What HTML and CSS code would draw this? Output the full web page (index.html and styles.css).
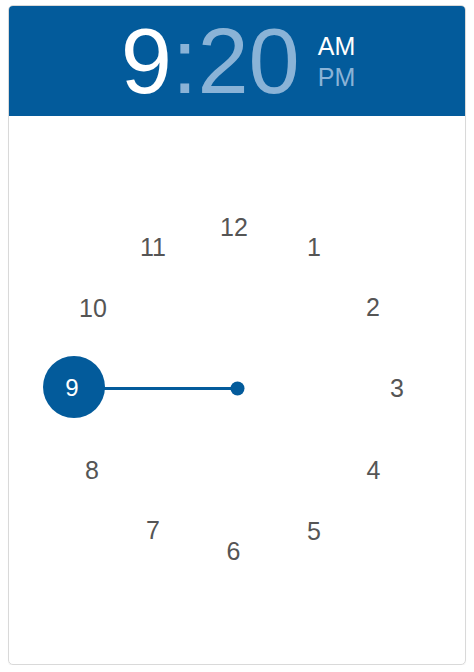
FILE: index.html
```html
<!DOCTYPE html>
<html>
<head>
<meta charset="utf-8">
<link rel="stylesheet" href="styles.css">
</head>
<body>
<div class="card">
  <div class="header">
    <div class="time"><span class="hour">9</span><span class="dim">:20</span></div>
    <div class="ampm">
      <div class="am">AM</div>
      <div class="pm">PM</div>
    </div>
  </div>
  <div class="face">
    <svg class="dial" width="456" height="548" viewBox="0 0 456 548">
      <line class="hand" x1="65" y1="272.5" x2="228.5" y2="272.5"/>
      <circle class="pivot" cx="228.5" cy="272.5" r="7"/>
      <circle class="knob" cx="65" cy="271" r="31"/>
      <g class="nums">
        <text x="225" y="111">12</text>
        <text x="305" y="131">1</text>
        <text x="364" y="191">2</text>
        <text x="388" y="272">3</text>
        <text x="364.5" y="354">4</text>
        <text x="305" y="415">5</text>
        <text x="224.5" y="435">6</text>
        <text x="144" y="414">7</text>
        <text x="83" y="354">8</text>
        <text x="84" y="191.5">10</text>
        <text x="144" y="131">11</text>
      </g>
      <text class="sel" x="63" y="271">9</text>
    </svg>
  </div>
</div>
</body>
</html>
```
FILE: styles.css
```css
html, body {
  margin: 0;
  padding: 0;
  background: #fff;
}
body {
  font-family: "Liberation Sans", Arial, sans-serif;
}
.card {
  margin: 5px 8px 0 8px;
  width: 456px;
  height: 658px;
  border: 1px solid #d9d9d9;
  border-radius: 5px;
  overflow: hidden;
  box-shadow: 0 1px 1px rgba(0,0,0,0.06);
}
.header {
  background: #035b9b;
  height: 110px;
  display: flex;
  justify-content: center;
  align-items: flex-start;
  gap: 18px;
  padding-top: 9px;
  box-sizing: border-box;
}
.time {
  font-size: 92px;
  line-height: 92px;
  color: #fff;
  letter-spacing: 0;
  margin-left: 2px;
}
.dim {
  color: #8ab3d7;
}
.ampm {
  margin-top: 16px;
  font-size: 25px;
  line-height: 31px;
}
.am {
  color: #fff;
}
.pm {
  color: #8ab3d7;
}
.face {
  height: 548px;
}
.dial {
  display: block;
}
.hand {
  stroke: #035b9b;
  stroke-width: 3;
}
.pivot, .knob {
  fill: #035b9b;
}
.nums text {
  font-family: "Liberation Sans", Arial, sans-serif;
  font-size: 25px;
  fill: #555;
  text-anchor: middle;
  dominant-baseline: central;
}
.sel {
  font-family: "Liberation Sans", Arial, sans-serif;
  font-size: 24px;
  fill: #fff;
  text-anchor: middle;
  dominant-baseline: central;
}
```
